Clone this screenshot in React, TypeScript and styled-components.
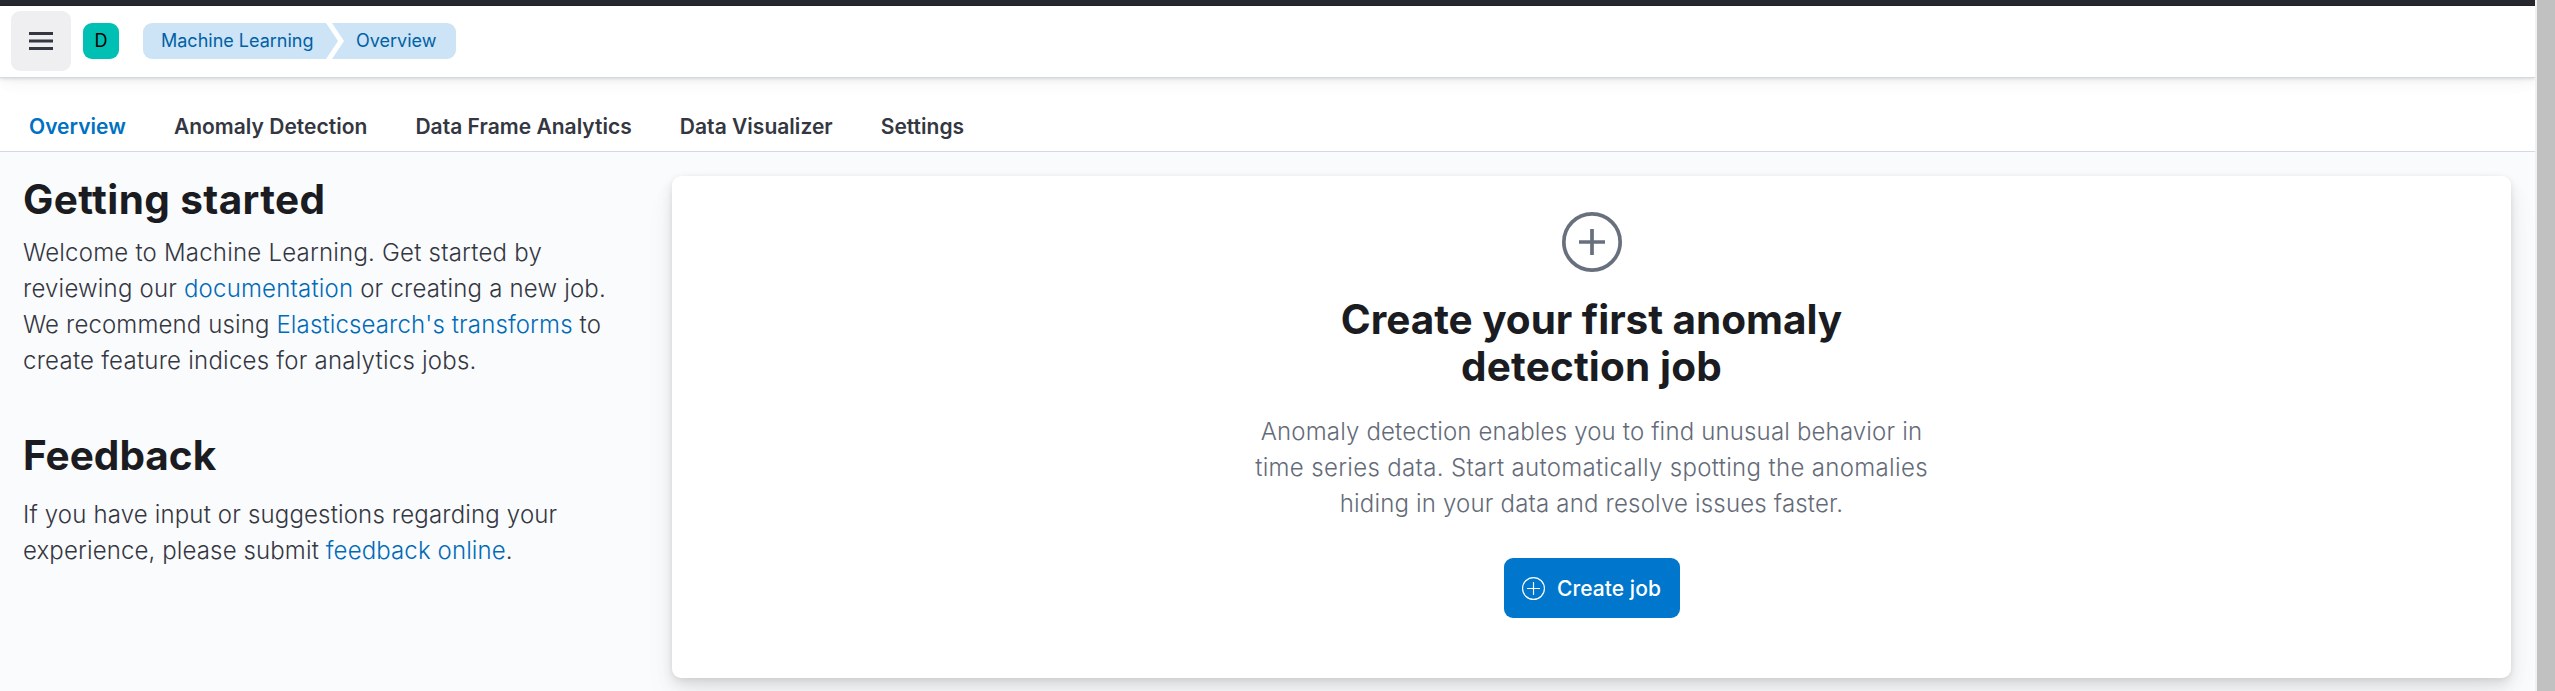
import React from 'react';
import styled, { createGlobalStyle } from 'styled-components';

const GlobalStyle = createGlobalStyle`
  * { box-sizing: border-box; }
  body {
    margin: 0;
    overflow: hidden;
    font-family: Inter, "Liberation Sans", sans-serif;
    color: #343741;
    background: #fafbfd;
  }
  h2, p { margin: 0; }
`;

const Shell = styled.div`
  display: flex;
  height: 691px;
`;

const Page = styled.div`
  display: flex;
  flex-direction: column;
  flex: 1;
  min-width: 0;
  overflow: hidden;
`;

const ScrollTrack = styled.div`
  flex: none;
  width: 20px;
  background: #c1c1c1;
  border-left: 2px solid #f1f1f1;
`;

const TopBar = styled.div`
  flex: none;
  height: 6px;
  background: #25282f;
  border-bottom: 1px solid #2b1f2c;
`;

const Header = styled.header`
  flex: none;
  display: flex;
  align-items: center;
  height: 72px;
  padding-left: 11px;
  background: #fff;
  border-bottom: 1px solid #d3dae6;
  z-index: 1;
  box-shadow: 0 1px 3px rgba(0, 0, 0, 0.1), 0 3px 7px rgba(0, 0, 0, 0.04),
    0 8px 14px rgba(0, 0, 0, 0.02), 0 12px 24px rgba(0, 0, 0, 0.01);
`;

const MenuButton = styled.button`
  display: flex;
  align-items: center;
  justify-content: center;
  width: 60px;
  height: 60px;
  margin-bottom: 1px;
  padding: 0;
  border: 0;
  border-radius: 9px;
  background: #efeff1;
`;

const Avatar = styled.div`
  width: 36px;
  height: 36px;
  margin: 0 24px 1px 12px;
  border-radius: 9px;
  background: #00bfb3;
  color: #000;
  font-size: 18px;
  line-height: 36px;
  text-align: center;
`;

const Breadcrumbs = styled.nav`
  display: flex;
  margin-bottom: 1px;
`;

const Crumb = styled.a<{ $last?: boolean }>`
  height: 36px;
  width: ${p => (p.$last ? 124 : 195)}px;
  margin-left: ${p => (p.$last ? -6 : 0)}px;
  padding-left: ${p => (p.$last ? 24 : 18)}px;
  border-radius: ${p => (p.$last ? '0 9px 9px 0' : '9px 0 0 9px')};
  clip-path: ${p =>
    p.$last
      ? 'polygon(0 0, 100% 0, 100% 100%, 0 100%, 12px 50%)'
      : 'polygon(0 0, calc(100% - 12px) 0, 100% 50%, calc(100% - 12px) 100%, 0 100%)'};
  background: #cce4f5;
  color: #0061a6;
  font-size: 18px;
  font-weight: 400;
  line-height: 36px;
  white-space: nowrap;
`;

const Tabs = styled.nav`
  flex: none;
  display: flex;
  align-items: flex-end;
  gap: 48px;
  height: 74px;
  padding-left: 29px;
  background: #fff;
  border-bottom: 1px solid #d3dae6;
`;

const Tab = styled.a<{ $active?: boolean }>`
  color: ${p => (p.$active ? '#0071c2' : '#343741')};
  font-size: 21px;
  font-weight: 600;
  letter-spacing: 0.02px;
  line-height: 48px;
  white-space: nowrap;
`;

const Content = styled.main`
  display: flex;
  align-items: flex-start;
  flex: 1;
  padding: 24px 24px 0 23px;
`;

const Intro = styled.aside`
  flex: none;
  width: 649px;
`;

const Title = styled.h2`
  color: #1a1c21;
  font-size: 40.5px;
  font-weight: 700;
  line-height: 48px;
`;

const Copy = styled.p<{ $gap: number }>`
  margin-top: ${p => p.$gap}px;
  font-size: 24px;
  font-weight: 300;
  line-height: 36px;
  white-space: nowrap;
`;

const Line = styled.span<{ $track?: number }>`
  display: block;
  letter-spacing: ${p => p.$track ?? 0}px;
`;

const Feedback = styled.section`
  margin-top: 53px;
`;

const Link = styled.a`
  color: #006bb8;
`;

const Panel = styled.section`
  flex: 1;
  display: flex;
  flex-direction: column;
  align-items: center;
  height: 502px;
  padding-top: 36px;
  border-radius: 9px;
  background: #fff;
  text-align: center;
  box-shadow: 0 1px 5px rgba(0, 0, 0, 0.06), 0 5px 12px rgba(0, 0, 0, 0.07),
    0 9px 20px rgba(0, 0, 0, 0.06), 0 20px 36px rgba(0, 0, 0, 0.04);
`;

const PromptTitle = styled(Title)`
  margin-top: 24px;
  line-height: 47px;
`;

const PromptCopy = styled(Copy)`
  color: #646b78;
`;

const CreateButton = styled.button`
  display: flex;
  align-items: center;
  justify-content: center;
  gap: 12px;
  width: 176px;
  height: 60px;
  margin-top: 36px;
  padding: 0;
  border: 0;
  border-radius: 9px;
  background: #0077cc;
  color: #fff;
  font-family: inherit;
  font-size: 21px;
  font-weight: 500;
  letter-spacing: 0.05px;
  white-space: nowrap;
`;

const MenuIcon = () => (
  <svg width="24" height="18" viewBox="0 0 24 18" fill="#343741">
    <path d="M0 0h24v3H0zM0 15h24v3H0zM0 8h24v2H0z" />
    <path d="M0 7h24v1H0zM0 10h24v1H0z" opacity=".5" />
  </svg>
);

const PlusCircle = ({ size, stroke }: { size: number; stroke: number }) => (
  <svg width={size} height={size} viewBox="0 0 60 60" fill="none" stroke="currentColor" strokeWidth={stroke}>
    <circle cx="30" cy="30" r={30 - stroke / 2} />
    <path d={size > 30 ? 'M30 17v26M17 30h26' : 'M30 13v34M13 30h34'} />
  </svg>
);

const PromptIcon = styled.div`
  height: 60px;
  color: #69707d;
  svg { display: block; }
`;

const tabs = ['Overview', 'Anomaly Detection', 'Data Frame Analytics', 'Data Visualizer', 'Settings'];

export default function App() {
  return (
    <Shell>
      <GlobalStyle />
      <Page>
        <TopBar />
        <Header>
          <MenuButton aria-label="Menu"><MenuIcon /></MenuButton>
          <Avatar>D</Avatar>
          <Breadcrumbs>
            <Crumb>Machine Learning</Crumb>
            <Crumb $last>Overview</Crumb>
          </Breadcrumbs>
        </Header>
        <Tabs>
          {tabs.map((name, i) => <Tab key={name} $active={i === 0}>{name}</Tab>)}
        </Tabs>
        <Content>
          <Intro>
            <Title><Line $track={0.38}>Getting started</Line></Title>
            <Copy $gap={11}>
              <Line $track={0.21}>Welcome to Machine Learning. Get started by</Line>
              <Line $track={0.19}>reviewing our <Link>documentation</Link> or creating a new job.</Line>
              <Line $track={0.13}>We recommend using <Link>Elasticsearch's transforms</Link> to</Line>
              <Line $track={0.23}>create feature indices for analytics jobs.</Line>
            </Copy>
            <Feedback>
              <Title>Feedback</Title>
              <Copy $gap={17}>
                <Line $track={0.16}>If you have input or suggestions regarding your</Line>
                <Line $track={0.12}>experience, please submit <Link>feedback online</Link>.</Line>
              </Copy>
            </Feedback>
          </Intro>
          <Panel>
            <PromptIcon><PlusCircle size={60} stroke={3.7} /></PromptIcon>
            <PromptTitle>
              <Line $track={-0.04}>Create your first anomaly</Line>
              <Line $track={0.15}>detection job</Line>
            </PromptTitle>
            <PromptCopy $gap={24}>
              <Line $track={0.16}>Anomaly detection enables you to find unusual behavior in</Line>
              <Line $track={0.33}>time series data. Start automatically spotting the anomalies</Line>
              <Line $track={0.18}>hiding in your data and resolve issues faster.</Line>
            </PromptCopy>
            <CreateButton><PlusCircle size={23} stroke={3} />Create job</CreateButton>
          </Panel>
        </Content>
      </Page>
      <ScrollTrack />
    </Shell>
  );
}
